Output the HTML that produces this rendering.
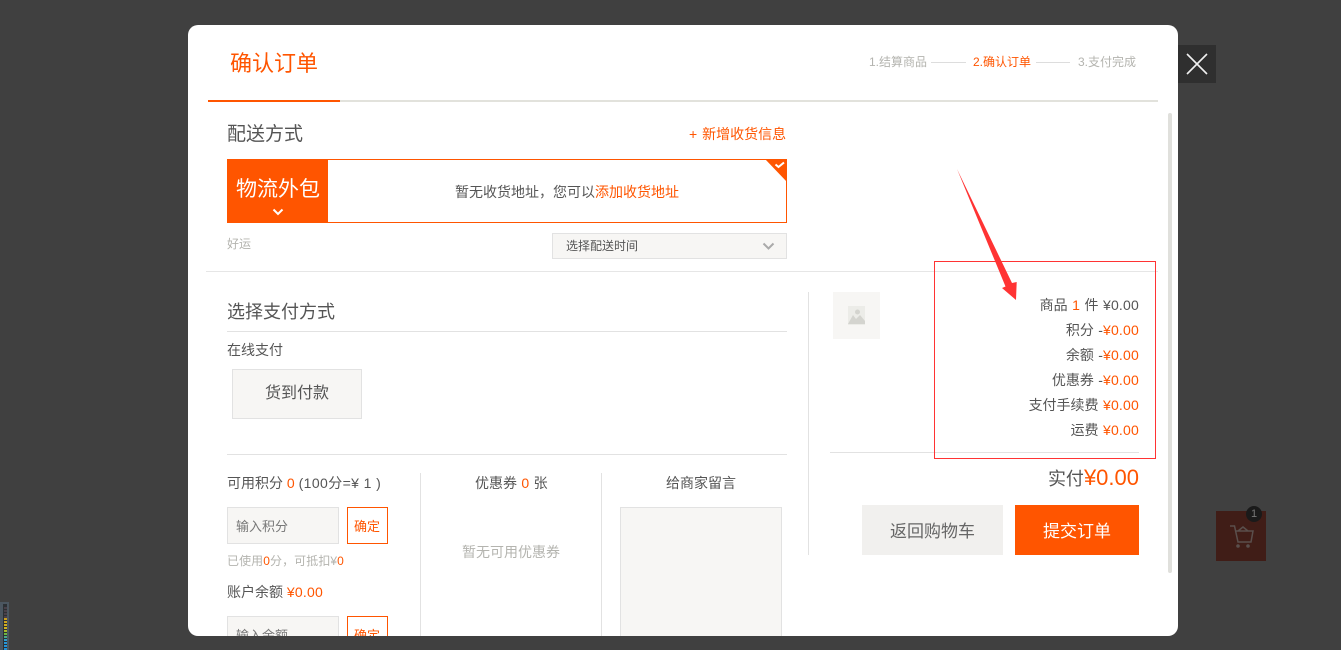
<!DOCTYPE html>
<html lang="zh"><head><meta charset="utf-8"><title>确认订单</title>
<style>
html,body{margin:0;padding:0;width:1341px;height:650px;overflow:hidden;background:#404040}
body{position:relative;font-family:"Liberation Sans","Noto Sans CJK SC",sans-serif;font-size:14px;color:#555}
.a{position:absolute}
.t{position:absolute;white-space:nowrap;line-height:20px}
.o{color:#ff5500}
.g{color:#b4b4af}
.n{letter-spacing:.2px}
.r{position:absolute;right:202px;text-align:right;white-space:nowrap;line-height:20px;word-spacing:.5px}
#m{position:absolute;left:188px;top:25px;width:990px;height:611px;background:#fff;border-radius:10px;}
</style></head><body>
<div id="m"></div>
<div class="a" style="left:1178px;top:45px;width:38px;height:38px;background:#2f2f2f"></div>
<svg class="a" style="left:1178px;top:45px" width="38" height="38"><path d="M9 9L29 29M29 9L9 29" stroke="#f0f0f0" stroke-width="1.6" fill="none"/></svg>

<div class="t o" style="left:230px;top:49px;font-size:22px;line-height:30px">确认订单</div>
<div class="t g" style="left:869px;top:52px;font-size:12px">1.结算商品</div>
<div class="a" style="left:931px;top:62px;width:35px;height:1px;background:#ddd"></div>
<div class="t o" style="left:973px;top:52px;font-size:12px">2.确认订单</div>
<div class="a" style="left:1036px;top:62px;width:34px;height:1px;background:#ddd"></div>
<div class="t g" style="left:1078px;top:52px;font-size:12px">3.支付完成</div>
<div class="a" style="left:208px;top:100px;width:950px;height:2px;background:#e2e2dc"></div>
<div class="a" style="left:208px;top:100px;width:132px;height:2px;background:#ff5500"></div>
<div class="a" style="left:1168px;top:113px;width:4px;height:460px;background:#e0e0dc;border-radius:2px"></div>

<div class="t" style="left:227px;top:123px;font-size:19px;line-height:24px">配送方式</div>
<div class="t o" style="left:689px;top:124px;word-spacing:1px">+ 新增收货信息</div>
<div class="a" style="left:227px;top:159px;width:558px;height:62px;border:1px solid #ff5500"></div>
<div class="a" style="left:227px;top:159px;width:101px;height:64px;background:#ff5500"></div>
<div class="t" style="left:236px;top:176px;font-size:21px;line-height:28px;color:#fff">物流外包</div>
<svg class="a" style="left:272px;top:208px" width="12" height="9"><path d="M1.500 1.500L6 6L10.500 1.500" stroke="#fff" stroke-width="2" fill="none"/></svg>
<svg class="a" style="left:765px;top:159px" width="22" height="23"><path d="M0 0H22V23Z" fill="#ff5500"/><path d="M10.500 5.500L13.500 8L19 3.500" stroke="#fff" stroke-width="2" fill="none"/></svg>
<div class="t" style="left:455px;top:182px">暂无收货地址，您可以<span class="o">添加收货地址</span></div>
<div class="t g" style="left:227px;top:234px;font-size:12px">好运</div>
<div class="a" style="left:552px;top:233px;width:233px;height:24px;background:#f7f6f4;border:1px solid #e2e2e2"></div>
<div class="t" style="left:566px;top:236px;font-size:12px">选择配送时间</div>
<svg class="a" style="left:762px;top:242px" width="13" height="9"><path d="M1.500 1.500L6.500 6.500L11.500 1.500" stroke="#aaa" stroke-width="2" fill="none"/></svg>
<div class="a" style="left:206px;top:271px;width:952px;height:1px;background:#e6e6e6"></div>

<div class="t" style="left:227px;top:302px;font-size:18px">选择支付方式</div>
<div class="a" style="left:227px;top:331px;width:560px;height:1px;background:#e2e2e2"></div>
<div class="t" style="left:227px;top:340px;font-size:14px">在线支付</div>
<div class="a" style="left:232px;top:369px;width:128px;height:48px;background:#f7f6f4;border:1px solid #e2e2e2"></div>
<div class="t" style="left:265px;top:385px;font-size:16px;line-height:18px">货到付款</div>
<div class="a" style="left:227px;top:454px;width:560px;height:1px;background:#e2e2e2"></div>

<div class="t" style="left:227px;top:473px">可用积分 <span class="o">0</span> <span style="letter-spacing:.4px">(100分=¥ 1 )</span></div>
<div class="a" style="left:227px;top:507px;width:110px;height:35px;background:#f7f6f4;border:1px solid #e2e2e2"></div>
<div class="t" style="left:236px;top:516px;font-size:13px;line-height:22px;color:#777">输入积分</div>
<div class="a" style="left:347px;top:507px;width:39px;height:35px;border:1px solid #ff5500"></div>
<div class="t o" style="left:354px;top:516px;font-size:13px;line-height:22px">确定</div>
<div class="t g" style="left:227px;top:551px;font-size:12px;letter-spacing:.08px">已使用<span class="o">0</span>分，可抵扣¥<span class="o">0</span></div>
<div class="t" style="left:227px;top:582px">账户余额 <span class="o n">¥0.00</span></div>
<div class="a" style="left:227px;top:616px;width:110px;height:35px;background:#f7f6f4;border:1px solid #e2e2e2"></div>
<div class="t" style="left:236px;top:625px;font-size:13px;line-height:22px;color:#777">输入余额</div>
<div class="a" style="left:347px;top:616px;width:39px;height:35px;border:1px solid #ff5500"></div>
<div class="t o" style="left:354px;top:625px;font-size:13px;line-height:22px">确定</div>

<div class="a" style="left:420px;top:473px;width:1px;height:163px;background:#e2e2e2"></div>
<div class="a" style="left:601px;top:473px;width:1px;height:163px;background:#e2e2e2"></div>
<div class="t" style="left:475px;top:473px;word-spacing:.5px">优惠券 <span class="o">0</span> 张</div>
<div class="t g" style="left:462px;top:542px">暂无可用优惠券</div>
<div class="t" style="left:666px;top:473px">给商家留言</div>
<div class="a" style="left:620px;top:507px;width:160px;height:140px;background:#f7f6f4;border:1px solid #e2e2e2"></div>
<div class="a" style="left:215px;top:636px;width:930px;height:14px;background:#404040"></div>

<div class="a" style="left:808px;top:292px;width:1px;height:263px;background:#e2e2e2"></div>
<div class="a" style="left:833px;top:292px;width:47px;height:47px;background:#f7f6f4"></div>
<svg class="a" style="left:848px;top:306px" width="17" height="19"><rect width="17" height="19" fill="#ecece8"/><path d="M0 18L5 9L8 13L12 9L17 15V18Z" fill="#d4d4cf"/><circle cx="9.500" cy="6" r="2.500" fill="#d4d4cf"/></svg>

<div class="r" style="top:295px;word-spacing:.6px">商品 <span class="o">1</span> 件 <span class="n">¥0.00</span></div>
<div class="r" style="top:320px">积分 -<span class="o n">¥0.00</span></div>
<div class="r" style="top:345px">余额 -<span class="o n">¥0.00</span></div>
<div class="r" style="top:370px">优惠券 -<span class="o n">¥0.00</span></div>
<div class="r" style="top:395px">支付手续费 <span class="o n">¥0.00</span></div>
<div class="r" style="top:420px">运费 <span class="o n">¥0.00</span></div>
<div class="a" style="left:830px;top:452px;width:309px;height:1px;background:#e2e2e2"></div>
<div class="r" style="top:463px;font-size:18px;line-height:30px">实付<span class="o" style="font-size:22px">¥0.00</span></div>

<div class="a" style="left:862px;top:505px;width:141px;height:50px;background:#f1f0ee;color:#666;font-size:17px;line-height:53px;text-align:center">返回购物车</div>
<div class="a" style="left:1015px;top:505px;width:124px;height:50px;background:#ff5500;color:#fff;font-size:17px;line-height:53px;text-align:center">提交订单</div>

<div class="a" style="left:934px;top:261px;width:220px;height:196px;border:1px solid #f33"></div>
<svg class="a" style="left:950px;top:160px" width="75" height="145"><path d="M7 9L62 123L66.700 122L66 140L52 128L55.500 126.500Z" fill="#f33"/></svg>

<div class="a" style="left:1216px;top:511px;width:50px;height:50px;background:#401d17"></div>
<svg class="a" style="left:1228px;top:522px" width="28" height="28"><path d="M2 4H6.500L10 20H23L25 9H8M10 9L15 5L20 9" stroke="#5a4f4c" stroke-width="1.500" fill="none"/><circle cx="10" cy="24" r="1.800" fill="#5a4f4c"/><circle cx="20" cy="24" r="1.800" fill="#5a4f4c"/></svg>
<div class="a" style="left:1246px;top:506px;width:16px;height:16px;border-radius:50%;background:#1a1a1a;color:#777;font-size:11px;line-height:16px;text-align:center">1</div>

<div class="a" style="left:0;top:602px;width:9px;height:48px;background:#4b5660"></div>
<div class="a" style="left:3px;top:604px;width:4px;height:46px;background:#2c3034"></div>
<div class="a" style="left:4px;top:607px;width:3px;height:11px;background:repeating-linear-gradient(to bottom,#4a4048 0 2px,#2c3034 2px 3px)"></div>
<div class="a" style="left:4px;top:618px;width:3px;height:32px;background:repeating-linear-gradient(to bottom,transparent 0 2px,#2c3034 2px 3px),linear-gradient(#ca9a1e 0,#cfb81f 35%,#6ab83c 50%,#2a9bd8 70%,#1f8fd8 100%)"></div>
</body></html>
